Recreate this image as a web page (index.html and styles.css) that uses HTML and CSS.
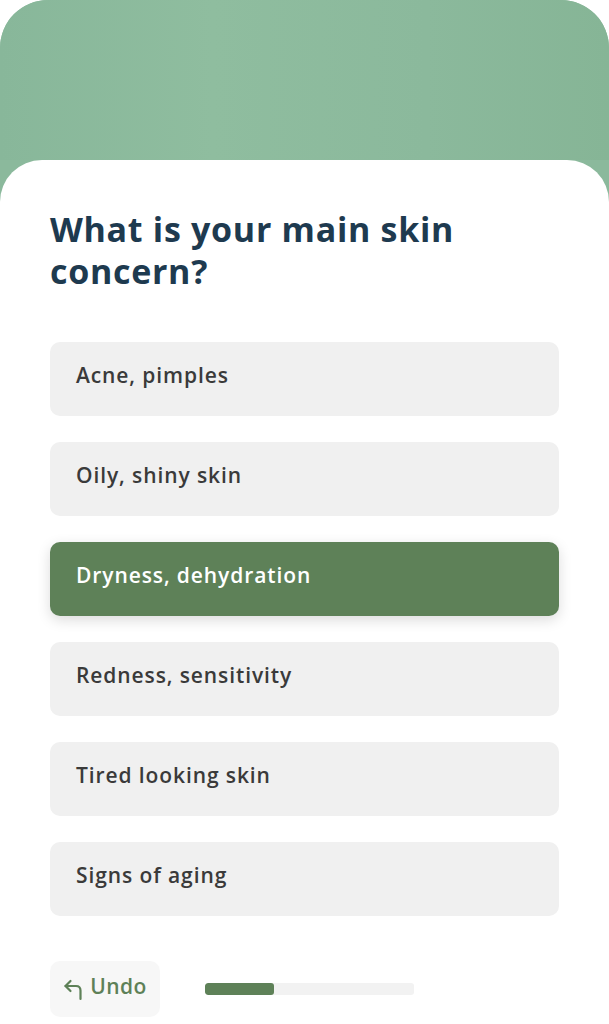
FILE: index.html
```html
<!DOCTYPE html>
<html lang="en">
<head>
<meta charset="utf-8">
<link rel="stylesheet" href="styles.css">
</head>
<body>
<div class="screen">
  <div class="hero"></div>
  <div class="card">
    <h1 class="title">What is your main skin concern?</h1>
    <div class="options">
      <div class="option">Acne, pimples</div>
      <div class="option">Oily, shiny skin</div>
      <div class="option selected">Dryness, dehydration</div>
      <div class="option">Redness, sensitivity</div>
      <div class="option">Tired looking skin</div>
      <div class="option">Signs of aging</div>
    </div>
    <div class="footer">
      <div class="undo">
        <svg class="undo-icon" width="22" height="24" viewBox="0 0 22 24" fill="none" stroke="#5e8158" stroke-width="2.2" stroke-linecap="round" stroke-linejoin="round">
          <path d="M7.5 3 L2.5 8 L7.5 13"/>
          <path d="M2.5 8 H13 Q17.5 8 17.5 12.5 V21"/>
        </svg>
        <span>Undo</span>
      </div>
      <div class="progress"><div class="progress-fill" style="width:33%"></div></div>
    </div>
  </div>
</div>
</body>
</html>
```

FILE: styles.css
```css
html, body {
  margin: 0;
  padding: 0;
  background: #ffffff;
}
body {
  font-family: "Open Sans", "Noto Sans", "Liberation Sans", sans-serif;
  width: 609px;
  height: 1024px;
  overflow: hidden;
}
.screen {
  width: 609px;
  height: 1024px;
  border-radius: 48px 48px 0 0;
  background: #8bb99c;
  overflow: hidden;
  display: flex;
  flex-direction: column;
}
.hero {
  height: 160px;
  flex: none;
  background: linear-gradient(90deg, #88b79a 0%, #8fbd9f 35%, #8bb99c 70%, #86b596 100%);
}
.card {
  flex: 1;
  background: #ffffff;
  border-radius: 42px 42px 0 0;
  padding: 48px 50px 0 50px;
  display: flex;
  flex-direction: column;
}
.title {
  margin: 0;
  max-width: 470px;
  font-size: 34px;
  line-height: 42px;
  font-weight: 700;
  color: #1e3a4f;
  letter-spacing: 0.7px;
}
.options {
  margin-top: 50px;
  display: flex;
  flex-direction: column;
  gap: 26px;
  width: 509px;
}
.option {
  height: 74px;
  box-sizing: border-box;
  background: #f0f0f0;
  border-radius: 10px;
  padding: 0 26px 9px;
  display: flex;
  align-items: center;
  font-size: 21px;
  font-weight: 600;
  color: #3a3a3a;
  letter-spacing: 0.9px;
}
.option.selected {
  background: #5e8158;
  color: #ffffff;
  box-shadow: 0 4px 14px rgba(0, 0, 0, 0.14);
}
.footer {
  margin-top: 45px;
  display: flex;
  align-items: center;
  gap: 45px;
}
.undo {
  width: 110px;
  height: 56px;
  box-sizing: border-box;
  background: #f7f7f7;
  border-radius: 10px;
  display: flex;
  align-items: center;
  justify-content: center;
  gap: 5px;
  color: #5e8158;
  font-size: 21px;
  font-weight: 600;
  letter-spacing: 0.4px;
  padding-bottom: 6px;
}
.undo-icon {
  margin-top: 8px;
}
.progress {
  width: 209px;
  height: 12px;
  background: #f2f2f2;
  border-radius: 3px;
  overflow: hidden;
}
.progress-fill {
  height: 100%;
  background: #5e8158;
  border-radius: 3px;
}
```
